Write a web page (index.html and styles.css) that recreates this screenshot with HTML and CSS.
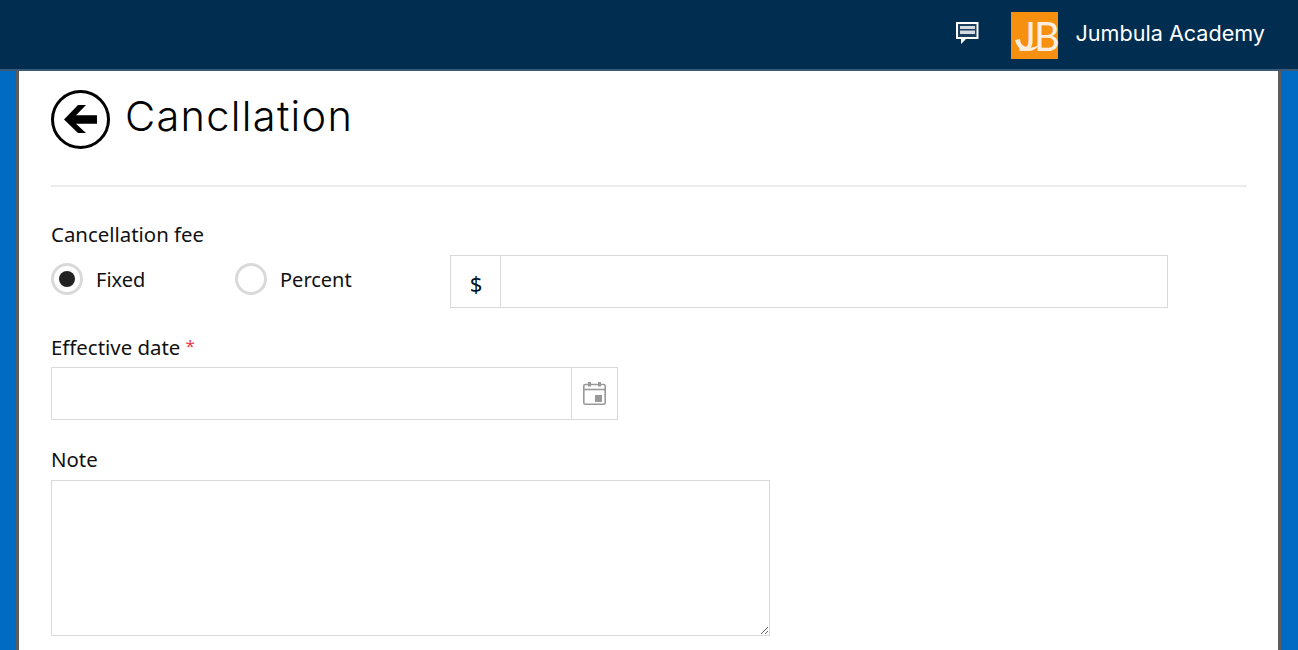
FILE: index.html
```html
<!DOCTYPE html>
<html lang="en">
<head>
  <meta charset="UTF-8">
  <title>Cancllation</title>
  <link rel="stylesheet" href="styles.css">
</head>
<body>

  <!-- top bar -->
  <header class="topbar">
    <svg class="chat-icon" width="24" height="24" viewBox="0 0 24 24">
      <path fill="#fff" d="M0 1h22.500v17H10l-5 5v-5H0z"/>
      <path fill="#1f3f5f" d="M2 3h18.500v13H2z"/>
      <path fill="#d5dbe3" d="M4 5h15v3H4zM4 9.500h15V13H4z"/>
    </svg>
    <div class="logo">
      <svg class="logo-tail" width="47" height="47" viewBox="0 0 47 47">
        <path fill="#fbeee0" d="M4 28 Q7 39 17 39 Q24 39 28 33 Q21 37 15 35 Q9 33 9 27 Z"/>
      </svg>
      JB
    </div>
    <span class="org-name">Jumbula Academy</span>
  </header>

  <main class="panel">
    <div class="title-row">
      <svg class="back-icon" width="59" height="59" viewBox="0 0 59 59">
        <circle cx="29.500" cy="29.500" r="28" fill="none" stroke="#000" stroke-width="3"/>
        <path fill="#000" d="M13 29.500 L27 15 H35 L25 25.300 H46 V33.700 H25 L35 43 H27 Z"/>
      </svg>
      <h1>Cancllation</h1>
    </div>

    <form class="form">
      <div class="field fee-field">
        <label class="field-label">Cancellation fee</label>
        <div class="fee-row">
          <label class="radio radio-fixed"><span class="radio-mark checked"></span>Fixed</label>
          <label class="radio radio-percent"><span class="radio-mark"></span>Percent</label>
          <div class="input-group fee-input">
            <span class="addon addon-left">$</span>
            <input type="text">
          </div>
        </div>
      </div>

      <div class="field date-field">
        <label class="field-label">Effective date <span class="req">*</span></label>
        <div class="input-group date-input">
          <input type="text">
          <span class="addon addon-right">
            <svg width="23" height="23" viewBox="0 0 23 23">
              <rect x="0.800" y="2.500" width="21.400" height="19.700" rx="1.500" fill="none" stroke="#999" stroke-width="1.600"/>
              <path fill="none" stroke="#999" stroke-width="1.600" d="M1 7.500h21"/>
              <path fill="#999" d="M5 0h3v4.500H5zM15 0h3v4.500h-3zM12 13h7v7h-7z"/>
            </svg>
          </span>
        </div>
      </div>

      <div class="field note-field">
        <label class="field-label">Note</label>
        <textarea></textarea>
      </div>
    </form>
  </main>

</body>
</html>
```

FILE: styles.css
```css
/* ==== base ==== */
* { margin:0; padding:0; box-sizing:border-box; }
html, body { height:100%; overflow:hidden; }
body {
  background:#006bc2;
  font-family:"Noto Sans","Open Sans",sans-serif;
  font-size:20.400px;
  color:#111;
  display:flex; flex-direction:column;
}

/* ==== top bar ==== */
.topbar {
  height:71px; flex:none;
  background:#002d50;
  border-bottom:2px solid #3a5a78;
  display:flex; align-items:center; justify-content:flex-end;
  padding:2px 33px 0 0;
  color:#fff;
}
.chat-icon { margin-right:31px; margin-top:-5px; }
.logo {
  position:relative;
  width:47px; height:47px;
  background:#f7900f;
  display:flex; align-items:center; justify-content:center;
  padding-left:7px;
  font-family:"Lato",sans-serif;
  font-weight:400; font-size:40px; letter-spacing:-2px;
  color:#fbeee0;
  margin-right:17px;
}
.logo-tail { position:absolute; left:0; top:0; }
.org-name { font-family:"Inter",sans-serif; font-size:21.600px; font-weight:400; margin-top:-5px; }

/* ==== panel ==== */
.panel {
  flex:1;
  margin:0 17px 0 16px;
  padding:0 31px 0 32px;
  background:#fff;
  border-left:3px solid #5c5c5c;
  border-right:3px solid #5c5c5c;
}
.title-row {
  height:116px;
  border-bottom:2px solid #ececec;
  display:flex; align-items:flex-start;
  padding-top:19px;
}
.back-icon { margin-right:15px; }
h1 {
  font-family:"Inter",sans-serif;
  font-weight:300; font-size:41.500px; letter-spacing:1.300px;
  line-height:52px; color:#000;
}

/* ==== form ==== */
.field-label { display:block; line-height:27px; }
.req { color:#ef3b4b; font-size:17px; line-height:0; vertical-align:3px; }
.fee-field { padding-top:34px; }
.fee-row { display:flex; align-items:center; margin-top:7px; }
.radio { display:flex; align-items:center; font-size:20px; padding-bottom:5px; }
.radio-fixed { width:184px; }
.radio-percent { width:215px; }
.radio-mark {
  width:32px; height:32px;
  border:3px solid #d9d9d9; border-radius:50%;
  margin-right:13px;
  display:flex; align-items:center; justify-content:center;
}
.radio-mark.checked::after {
  content:"";
  width:16px; height:16px;
  border-radius:50%;
  background:#222;
}
.input-group {
  display:flex;
  height:53px;
  border:1px solid #d9d9d9;
}
.input-group input { flex:1; min-width:0; border:none; outline:none; }
.addon { display:flex; align-items:center; justify-content:center; flex:none; }
.addon-left { width:50px; border-right:1px solid #d9d9d9; padding:3px 0 0 1px; font-size:22px; color:#012; }
.addon-right { width:46px; border-left:1px solid #d9d9d9; }
.fee-input { width:718px; }
.date-field { padding-top:26px; }
.date-input { width:567px; margin-top:6px; }
.note-field { padding-top:26px; }
textarea {
  display:block;
  width:719px; height:156px;
  border:1px solid #d9d9d9;
  outline:none;
  margin-top:7px;
}
```
